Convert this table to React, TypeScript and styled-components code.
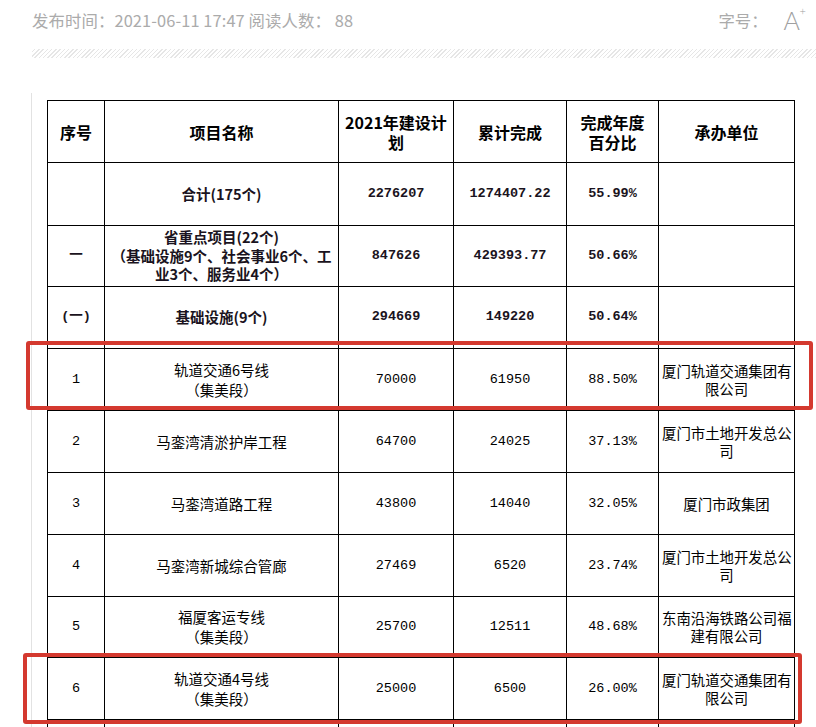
import React from "react";
import styled, { createGlobalStyle } from "styled-components";

const GlobalStyle = createGlobalStyle`
  html, body { margin: 0; padding: 0; background: #ffffff; }
  body { overflow: hidden; font-family: "Noto Sans CJK SC", "Noto Sans", sans-serif; }
`;

const Page = styled.div`
  width: 816px;
  height: 727px;
  overflow: hidden;
  background: #fff;
`;

const MetaBar = styled.div`
  display: flex;
  align-items: center;
  justify-content: space-between;
  height: 40px;
  padding: 0 10px 0 32px;
  color: #ababab;
  font-size: 16.4px;
  font-family: "Noto Sans CJK SC", "Noto Sans", sans-serif;
`;

const MetaText = styled.span`
  letter-spacing: 0.1px;
`;

const FontSize = styled.div`
  display: flex;
  align-items: center;
  gap: 16px;
`;

const BigA = styled.span`
  position: relative;
  font-family: "Lato", "DejaVu Sans", sans-serif;
  font-weight: 300;
  font-size: 25px;
  color: #a0a0a0;
  line-height: 1;
  padding-right: 6px;
`;

const Plus = styled.sup`
  position: absolute;
  right: 0;
  top: -3px;
  font-size: 11px;
  line-height: 1;
`;

const Stripes = styled.div`
  margin: 9px 0 0 32px;
  height: 9px;
  background: repeating-linear-gradient(
    -45deg,
    #e6e6e6 0px,
    #e6e6e6 1px,
    #ffffff 1px,
    #ffffff 3px
  );
`;

const Article = styled.div`
  position: relative;
  margin-top: 35px;
`;

const Frame = styled.div`
  margin-left: 31px;
  width: 776px;
  border-left: 1px solid #e2e2e2;
  border-right: 1px solid #d0d0d0;
  padding: 7px 0 0 15px;
  height: 700px;
`;

const Table = styled.table`
  border-collapse: collapse;
  table-layout: fixed;
  width: 747px;
  color: #000;
`;

const Row = styled.tr<{ $h: number }>`
  height: ${(p) => p.$h}px;
`;

const Cell = styled.td<{ $bold?: boolean; $num?: boolean; $head?: boolean }>`
  border: 1px solid #000;
  padding: 0 3px;
  text-align: center;
  vertical-align: middle;
  font-family: ${(p) =>
    p.$num
      ? `"Liberation Mono", "Noto Sans CJK SC", monospace`
      : `"Noto Sans CJK SC", "Liberation Mono", sans-serif`};
  font-size: ${(p) => (p.$head ? 16 : p.$num ? 13.5 : 14.5)}px;
  font-weight: ${(p) => (p.$bold || p.$head ? 700 : 400)};
  line-height: ${(p) => (p.$head ? 20 : p.$bold ? 18.5 : 20)}px;
  color: ${(p) => (p.$bold ? "#1a1320" : "#000")};
  white-space: nowrap;
`;

const UnitCell = styled(Cell)`
  line-height: 18px;
  font-size: 14.4px;
`;

const Highlight = styled.div<{ $l: number; $t: number; $w: number; $h: number }>`
  position: absolute;
  left: ${(p) => p.$l}px;
  top: ${(p) => p.$t}px;
  width: ${(p) => p.$w}px;
  height: ${(p) => p.$h}px;
  box-sizing: border-box;
  border: 4px solid #d4392f;
  border-radius: 3px;
  pointer-events: none;
`;

type RowData = {
  no: string;
  name: string[];
  plan: string;
  done: string;
  pct: string;
  unit: string[];
  bold?: boolean;
  h: number;
};

const rows: RowData[] = [
  { no: "", name: ["合计(175个)"], plan: "2276207", done: "1274407.22", pct: "55.99%", unit: [], bold: true, h: 63 },
  {
    no: "一",
    name: ["省重点项目(22个)", "（基础设施9个、社会事业6个、工", "业3个、服务业4个）"],
    plan: "847626",
    done: "429393.77",
    pct: "50.66%",
    unit: [],
    bold: true,
    h: 61,
  },
  { no: "(一)", name: ["基础设施(9个)"], plan: "294669", done: "149220", pct: "50.64%", unit: [], bold: true, h: 62 },
  { no: "1", name: ["轨道交通6号线", "（集美段）"], plan: "70000", done: "61950", pct: "88.50%", unit: ["厦门轨道交通集团有", "限公司"], h: 62 },
  { no: "2", name: ["马銮湾清淤护岸工程"], plan: "64700", done: "24025", pct: "37.13%", unit: ["厦门市土地开发总公", "司"], h: 62 },
  { no: "3", name: ["马銮湾道路工程"], plan: "43800", done: "14040", pct: "32.05%", unit: ["厦门市政集团"], h: 62 },
  { no: "4", name: ["马銮湾新城综合管廊"], plan: "27469", done: "6520", pct: "23.74%", unit: ["厦门市土地开发总公", "司"], h: 62 },
  { no: "5", name: ["福厦客运专线", "（集美段）"], plan: "25700", done: "12511", pct: "48.68%", unit: ["东南沿海铁路公司福", "建有限公司"], h: 61 },
  { no: "6", name: ["轨道交通4号线", "（集美段）"], plan: "25000", done: "6500", pct: "26.00%", unit: ["厦门轨道交通集团有", "限公司"], h: 62 },
  { no: "", name: [""], plan: "", done: "", pct: "", unit: [], h: 62 },
];

const Lines: React.FC<{ items: string[] }> = ({ items }) => (
  <>
    {items.map((t, i) => (
      <React.Fragment key={i}>
        {i > 0 && <br />}
        {t}
      </React.Fragment>
    ))}
  </>
);

export default function App() {
  return (
    <Page>
      <GlobalStyle />
      <MetaBar>
        <MetaText>发布时间：2021-06-11 17:47 阅读人数： 88</MetaText>
        <FontSize>
          <span>字号：</span>
          <BigA>
            A<Plus>+</Plus>
          </BigA>
        </FontSize>
      </MetaBar>
      <Stripes />
      <Article>
        <Frame>
          <Table>
            <colgroup>
              <col style={{ width: 57 }} />
              <col style={{ width: 234 }} />
              <col style={{ width: 115 }} />
              <col style={{ width: 113 }} />
              <col style={{ width: 92 }} />
              <col style={{ width: 136 }} />
            </colgroup>
            <tbody>
              <Row $h={62}>
                <Cell $head>序号</Cell>
                <Cell $head>项目名称</Cell>
                <Cell $head>
                  2021年建设计
                  <br />划
                </Cell>
                <Cell $head>累计完成</Cell>
                <Cell $head>
                  完成年度
                  <br />百分比
                </Cell>
                <Cell $head>承办单位</Cell>
              </Row>
              {rows.map((r, i) => (
                <Row key={i} $h={r.h}>
                  <Cell $bold={r.bold} $num>{r.no}</Cell>
                  <Cell $bold={r.bold}>
                    <Lines items={r.name} />
                  </Cell>
                  <Cell $bold={r.bold} $num>{r.plan}</Cell>
                  <Cell $bold={r.bold} $num>{r.done}</Cell>
                  <Cell $bold={r.bold} $num>{r.pct}</Cell>
                  <UnitCell>
                    <Lines items={r.unit} />
                  </UnitCell>
                </Row>
              ))}
            </tbody>
          </Table>
        </Frame>
        <Highlight $l={26} $t={248} $w={787} $h={69} />
        <Highlight $l={23} $t={560} $w={779} $h={71} />
      </Article>
    </Page>
  );
}
